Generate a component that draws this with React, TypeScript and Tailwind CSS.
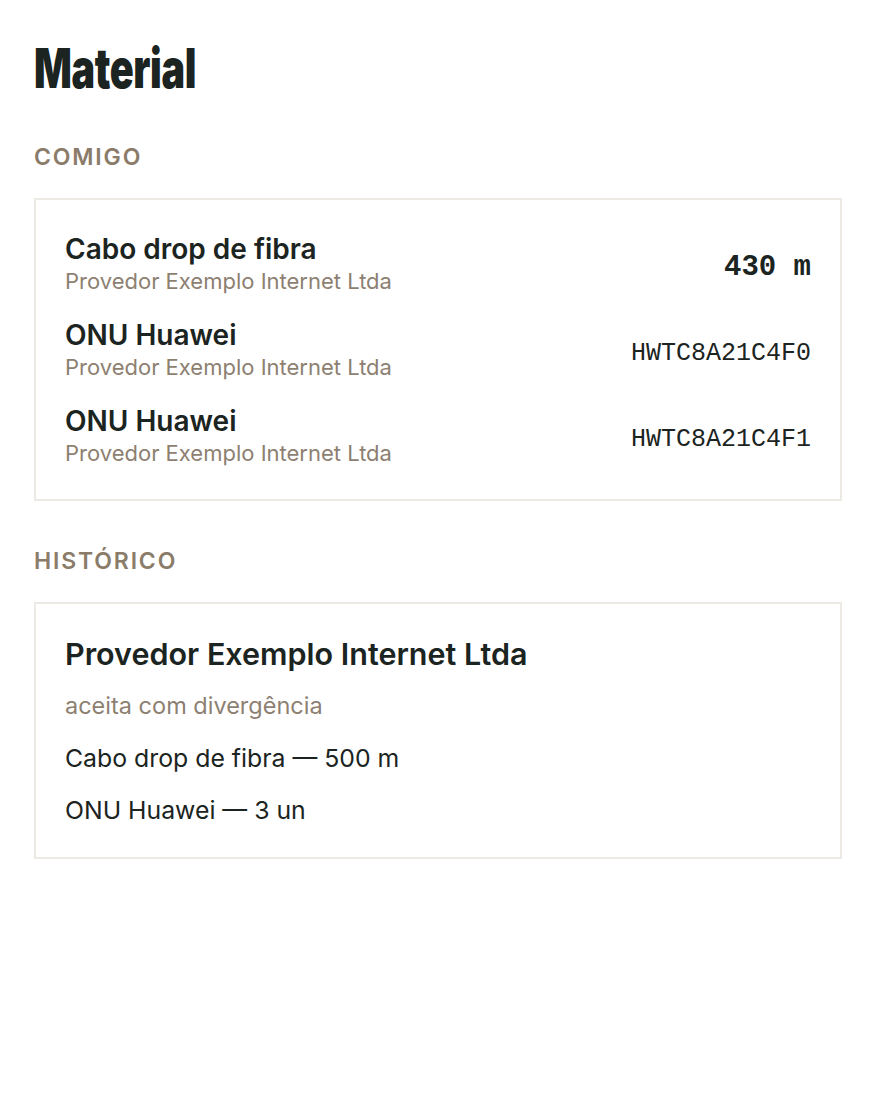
import React from "react";

const sans = "font-['Inter','Noto_Sans',sans-serif]";

type Item = { name: string; owner: string; value: string; strong?: boolean };

const comigo: Item[] = [
  { name: "Cabo drop de fibra", owner: "Provedor Exemplo Internet Ltda", value: "430 m", strong: true },
  { name: "ONU Huawei", owner: "Provedor Exemplo Internet Ltda", value: "HWTC8A21C4F0" },
  { name: "ONU Huawei", owner: "Provedor Exemplo Internet Ltda", value: "HWTC8A21C4F1" },
];

function SectionLabel({ children }: { children: React.ReactNode }) {
  return (
    <h2 className={`${sans} text-[23px] leading-[30px] font-semibold tracking-[0.08em] text-[#8b7b69]`}>
      {children}
    </h2>
  );
}

export default function App() {
  return (
    <div className={`${sans} min-h-[1100px] w-[876px] bg-white px-[34px] pt-[38px] text-[#1b2421]`}>
      <h1 className="origin-left scale-x-[0.72] font-['Inter',sans-serif] text-[55px] leading-[60px] font-black tracking-[-0.01em] whitespace-nowrap text-[#1b2421]">
        Material
      </h1>

      <div className="mt-[44px]">
        <SectionLabel>COMIGO</SectionLabel>
      </div>

      <div className="mt-[26px] flex flex-col gap-[22px] border-2 border-[#ede9e4] px-[29px] pt-[32px] pb-[31px]">
        {comigo.map((item, i) => (
          <div key={i} className="flex items-center justify-between">
            <div className="flex flex-col">
              <span className="text-[28px] leading-[34px] font-semibold">{item.name}</span>
              <span className="text-[22px] leading-[30px] text-[#8d7f71]">{item.owner}</span>
            </div>
            <span
              className={`pt-[7px] font-['Liberation_Mono','DejaVu_Sans_Mono',monospace] ${
                item.strong ? "text-[29px] font-bold" : "text-[25px]"
              } text-[#1b2421]`}
            >
              {item.value}
            </span>
          </div>
        ))}
      </div>

      <div className="mt-[45px]">
        <SectionLabel>HISTÓRICO</SectionLabel>
      </div>

      <div className="mt-[26px] flex flex-col border-2 border-[#ede9e4] px-[29px] pt-[31px] pb-[21px]">
        <span className="text-[30.5px] leading-[38px] font-semibold">Provedor Exemplo Internet Ltda</span>
        <span className="mt-[7px] text-[23.5px] leading-[52px] text-[#8d7f71]">aceita com divergência</span>
        <span className="text-[24.8px] leading-[52px]">Cabo drop de fibra — 500 m</span>
        <span className="text-[24.8px] leading-[52px]">ONU Huawei — 3 un</span>
      </div>
    </div>
  );
}
